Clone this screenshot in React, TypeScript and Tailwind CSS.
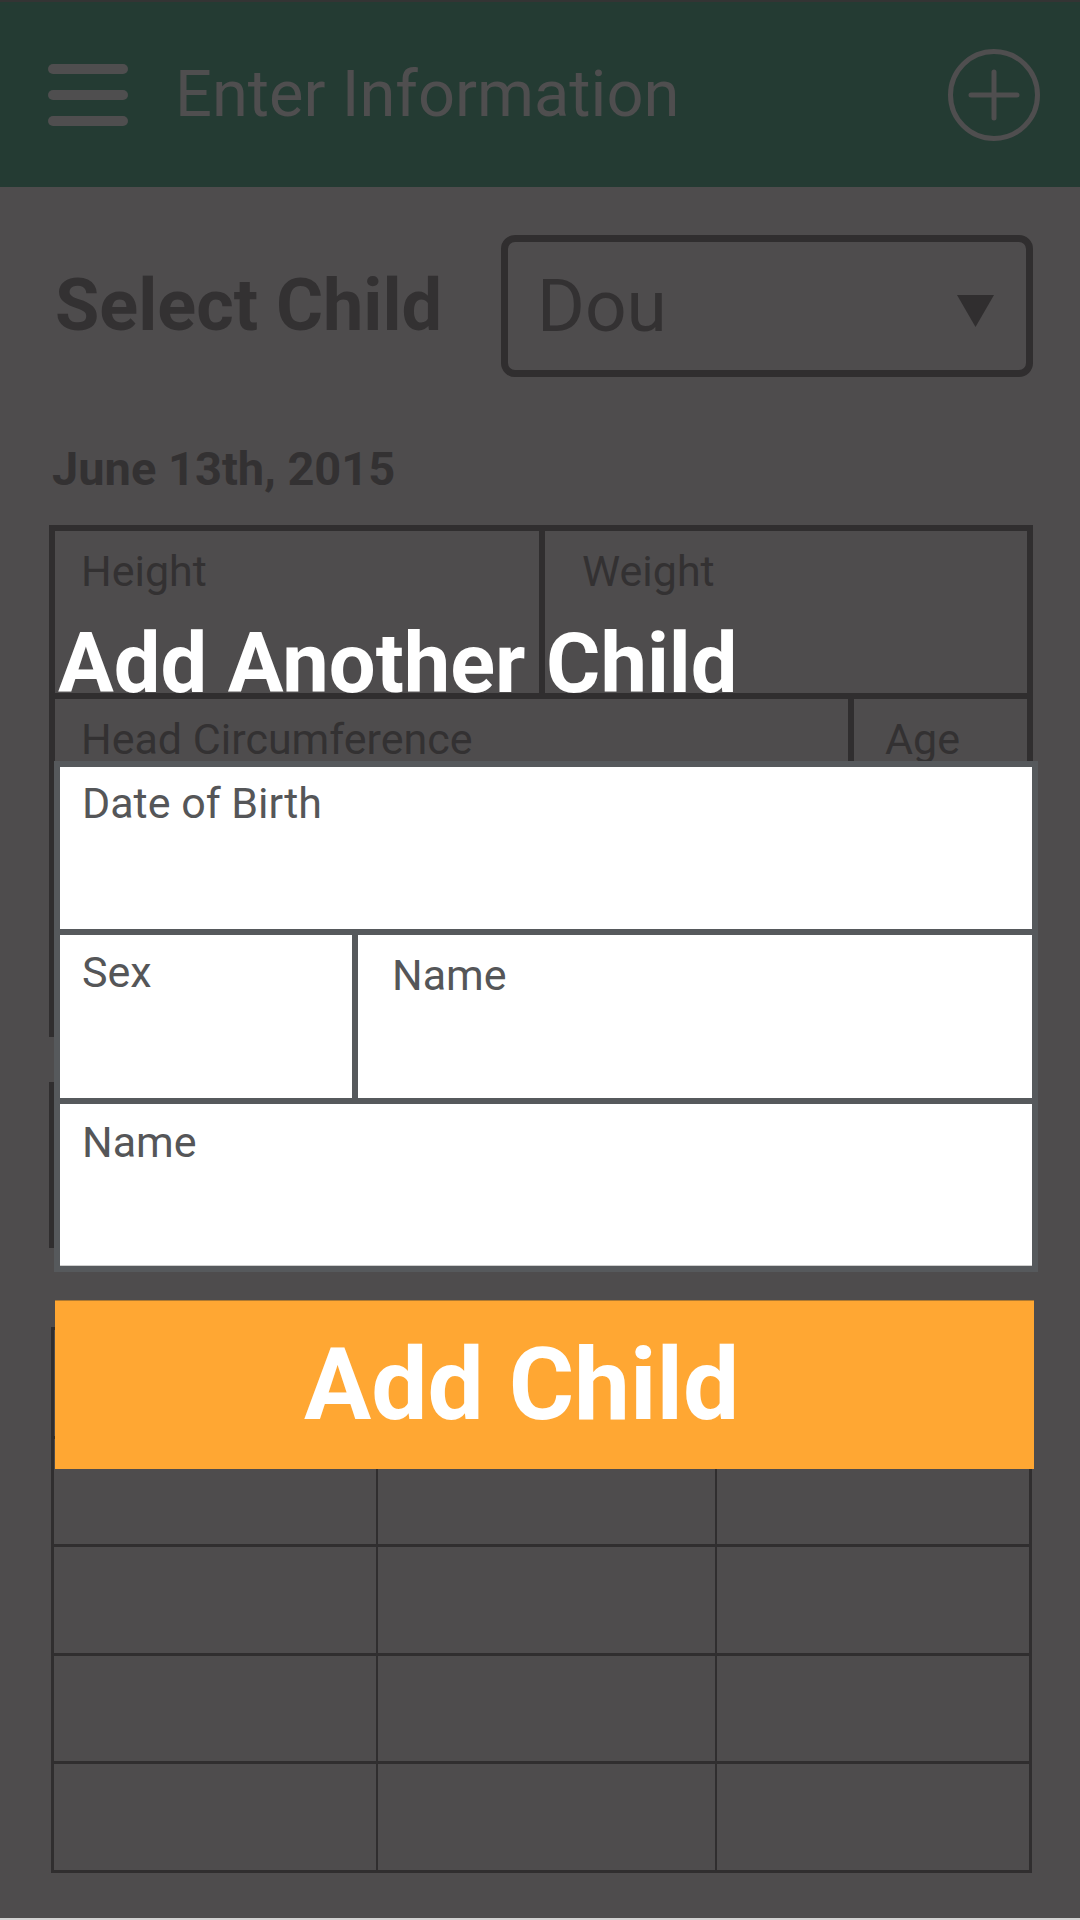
export default function App() {
  return (
    <div className="relative flex h-[1920px] w-[1080px] flex-col overflow-hidden bg-[#4e4c4d] font-['Roboto',sans-serif]">
      {/* top bar */}
      <header className="flex h-[187px] shrink-0 items-center border-t-2 border-[#343434] bg-[#243b33] pl-[48px] pr-[40px]">
        <div className="flex flex-col gap-[16px]">
          <span className="block h-[10px] w-[80px] rounded-full bg-[#4f4e4f]" />
          <span className="block h-[10px] w-[80px] rounded-full bg-[#4f4e4f]" />
          <span className="block h-[10px] w-[80px] rounded-full bg-[#4f4e4f]" />
        </div>
        <h1 className="ml-[47px] text-[65px] leading-none text-[#4f4e4f]">Enter Information</h1>
        <svg className="ml-auto" width="92" height="92" viewBox="0 0 92 92" fill="none">
          <circle cx="46" cy="46" r="43.5" stroke="#4f4e4f" strokeWidth="5" />
          <path d="M23 46h46M46 23v46" stroke="#4f4e4f" strokeWidth="5" strokeLinecap="round" />
        </svg>
      </header>

      {/* child select */}
      <div className="mt-[48px] flex h-[142px] items-center pl-[55px] pr-[47px]">
        <span className="text-[72px] font-bold leading-none text-[#333132]">Select Child</span>
        <div className="ml-auto flex h-[142px] w-[532px] items-center rounded-[14px] border-[7px] border-[#302e2f] pl-[29px] pr-[32px]">
          <span className="text-[73px] leading-none text-[#333132]">Dou</span>
          <svg className="ml-auto mt-[10px]" width="37" height="32" viewBox="0 0 37 32">
            <polygon points="0,0 37,0 18.5,32" fill="#302e2f" />
          </svg>
        </div>
      </div>

      <p className="mt-[68px] pl-[52px] text-[47px] font-bold leading-none text-[#333132]">June 13th, 2015</p>

      {/* measurements table */}
      <div className="ml-[49px] mt-[33px] h-[512px] w-[984px] shrink-0 border-[6px] border-[#302e2f]">
        <div className="flex h-[168px] border-b-[6px] border-[#302e2f]">
          <div className="w-[490px] border-r-[6px] border-[#302e2f] pl-[26px] pt-[19px] text-[43px] leading-none text-[#333132]">Height</div>
          <div className="flex-1 pl-[37px] pt-[19px] text-[43px] leading-none text-[#333132]">Weight</div>
        </div>
        <div className="flex h-[168px] border-b-[6px] border-[#302e2f]">
          <div className="w-[799px] border-r-[6px] border-[#302e2f] pl-[26px] pt-[19px] text-[43px] leading-none text-[#333132]">Head Circumference</div>
          <div className="flex-1 pl-[31px] pt-[19px] text-[43px] leading-none text-[#333132]">Age</div>
        </div>
      </div>

      <div className="ml-[49px] mt-[45px] h-[166px] w-[984px] shrink-0 border-l-[5px] border-[#302e2f]" />

      {/* history table */}
      <div className="ml-[51px] mt-[79px] flex h-[546px] w-[981px] shrink-0 flex-col border-[3px] border-[#302e2f]">
        {[0, 1, 2, 3, 4].map((r) => (
          <div
            key={r}
            className={
              r === 0
                ? 'grid flex-1 grid-cols-[322px_339px_1fr]'
                : 'grid flex-1 grid-cols-[322px_339px_1fr] border-t-[3px] border-[#302e2f]'
            }
          >
            <div />
            <div className="border-l-2 border-[#302e2f]" />
            <div className="border-l-2 border-[#302e2f]" />
          </div>
        ))}
      </div>

      <div className="mt-auto h-[2px] shrink-0 bg-[#d2d2d2]" />

      {/* add child dialog */}
      <div className="absolute left-[54px] top-[622px] flex w-[984px] flex-col">
        <h2 className="pl-[4px] text-[83px] font-bold leading-none text-white">Add Another Child</h2>
        <div className="mt-[56px] flex flex-col gap-[6px] bg-[#56595c] p-[6px]">
          <div className="h-[162px] bg-white pl-[22px] pt-[15px] text-[43px] leading-none text-[#555658]">Date of Birth</div>
          <div className="flex h-[163px] gap-[6px]">
            <div className="w-[292px] bg-white pl-[22px] pt-[16px] text-[43px] leading-none text-[#555658]">Sex</div>
            <div className="flex-1 bg-white pl-[34px] pt-[19px] text-[43px] leading-none text-[#555658]">Name</div>
          </div>
          <div className="h-[162px] border-b border-[#cfcfcf] bg-white pl-[22px] pt-[17px] text-[43px] leading-none text-[#555658]">Name</div>
        </div>
        <button className="ml-[1px] mt-[28px] flex h-[169px] w-[979px] items-center border-t border-[#b07a30] bg-[#ffa733] pl-[249px] text-[100px] font-bold leading-none text-white">
          Add Child
        </button>
      </div>
    </div>
  );
}
